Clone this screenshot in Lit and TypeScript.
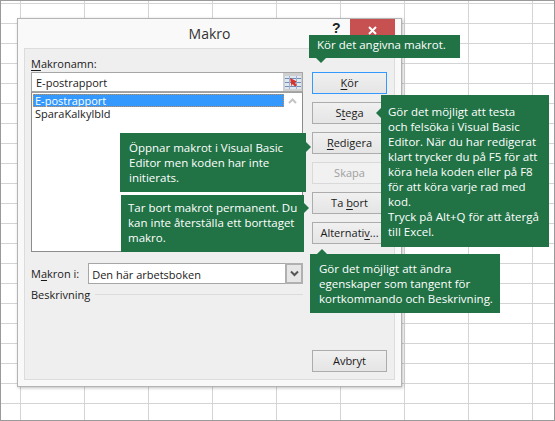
import { LitElement, html, css } from "lit";
import { customElement } from "lit/decorators.js";

@customElement("app-root")
export class AppRoot extends LitElement {
  static styles = css`
    :host {
      display: block;
      width: 555px;
      height: 421px;
      box-sizing: border-box;
      overflow: hidden;
      position: relative;
      font-family: "Open Sans", "Noto Sans", sans-serif;
      font-size: 11px;
      color: #1a1a1a;
      border: 1px solid #9a9a9a;
      background-color: #fff;
      background-image:
        linear-gradient(to right, #d4d4d4 1px, transparent 1px),
        linear-gradient(to bottom, #d4d4d4 1px, transparent 1px);
      background-size: 64px 20px;
      background-position: 19px 2px;
      padding: 17px 0 0 16px;
    }
    .dialog {
      width: 385px;
      height: 369px;
      box-sizing: border-box;
      background: #f9f9f9;
      border: 1px solid #b4b4b4;
      box-shadow: 1px 1px 3px rgba(0, 0, 0, 0.25);
      display: flex;
      flex-direction: column;
      padding: 0 6px 6px;
    }
    .title {
      height: 29px;
      flex: none;
      display: flex;
      align-items: center;
      justify-content: center;
      font-size: 14px;
      color: #333;
      position: relative;
    }
    .help {
      position: absolute;
      left: 308px;
      top: 1px;
      font-weight: 700;
      font-size: 14px;
      line-height: 16px;
      color: #222;
      font-family: "Liberation Sans", sans-serif;
    }
    .close {
      position: absolute;
      left: 326px;
      top: 0;
      width: 45px;
      height: 16px;
      background: #c75050;
      display: flex;
      align-items: center;
      justify-content: center;
      padding-top: 6px;
      box-sizing: border-box;
    }
    .panel {
      flex: 1;
      background: #efefef;
      border: 1px solid #dcdcdc;
      display: flex;
      gap: 9px;
      padding: 7px 7px 7px 6px;
    }
    .left {
      width: 272px;
      flex: none;
      display: flex;
      flex-direction: column;
    }
    u {
      text-underline-offset: 2px;
    }
    .lab {
      line-height: 15px;
      height: 15px;
      margin-bottom: 1px;
    }
    .name {
      display: flex;
      height: 20px;
      border: 1px solid #a6a6a6;
      box-sizing: border-box;
      background: #fff;
      align-items: center;
    }
    .name span {
      flex: 1;
      padding-left: 4px;
    }
    .pick {
      width: 19px;
      height: 18px;
      background: #cfcfcf;
      display: flex;
      align-items: center;
      justify-content: center;
    }
    .list {
      height: 160px;
      box-sizing: border-box;
      border: 1px solid #8c8c8c;
      border-top-color: #a0a0a0;
      background: #fff;
      display: flex;
      padding: 1px;
    }
    .items {
      flex: 1;
    }
    .item {
      height: 13px;
      line-height: 13px;
      padding-left: 2px;
    }
    .item.sel {
      background: #3399ff;
      color: #fff;
      outline: 1px dotted #d98a3c;
      outline-offset: -1px;
    }
    .scroll {
      width: 17px;
      display: flex;
      justify-content: center;
      padding-top: 4px;
      align-items: flex-start;
    }
    .in {
      display: flex;
      align-items: center;
      gap: 9px;
      margin-top: 11px;
    }
    .select {
      flex: 1;
      height: 21px;
      box-sizing: border-box;
      border: 1px solid #a6a6a6;
      background: #fff;
      display: flex;
      align-items: center;
      padding-left: 3px;
    }
    .select span {
      flex: 1;
      padding-top: 1px;
    }
    .arrow {
      width: 14px;
      height: 17px;
      background: #e6e6e6;
      border: 1px solid #b0b0b0;
      outline: 1px solid #b0b0b0;
      display: flex;
      align-items: center;
      justify-content: center;
    }
    .legend {
      display: flex;
      align-items: center;
      gap: 5px;
      margin-top: 3px;
      line-height: 15px;
    }
    .legend i {
      flex: 1;
      height: 1px;
      background: #dcdcdc;
    }
    .buttons {
      width: 75px;
      flex: none;
      display: flex;
      flex-direction: column;
      padding-top: 16px;
    }
    .btn {
      height: 22px;
      box-sizing: border-box;
      border: 1px solid #acacac;
      background: linear-gradient(#f0f0f0, #e5e5e5);
      display: flex;
      align-items: center;
      justify-content: center;
      margin-bottom: 8px;
      padding-bottom: 1px;
    }
    .btn.def {
      border-color: #3399ff;
    }
    .btn.off {
      color: #a0a0a0;
      background: #f1f1f1;
      border-color: #d9d9d9;
    }
    .btn.end {
      margin-top: auto;
      margin-bottom: 0;
    }
    .tip {
      position: absolute;
      background: #217346;
      color: #fff;
      box-sizing: border-box;
      font-size: 11.5px;
      line-height: 15px;
      white-space: nowrap;
    }
    .tip::after {
      content: "";
      position: absolute;
      width: 0;
      height: 0;
      border: 5px solid transparent;
    }
    .t1 {
      left: 308px;
      top: 34px;
      width: 151px;
      height: 23px;
      padding: 2px 8px;
    }
    .t1::after {
      left: 7px;
      top: 100%;
      border-top-color: #217346;
    }
    .t2 {
      left: 380px;
      top: 94px;
      width: 168px;
      height: 152px;
      padding: 9px 7px;
    }
    .t2::after {
      right: 100%;
      top: 13px;
      border-right-color: #217346;
    }
    .t3 {
      left: 119px;
      top: 132px;
      width: 186px;
      height: 59px;
      padding: 7px 9px;
    }
    .t3::after {
      left: 100%;
      top: 9px;
      border-left-color: #217346;
    }
    .t4 {
      left: 120px;
      top: 194px;
      width: 183px;
      height: 57px;
      padding: 5px 7px;
    }
    .t4::after {
      left: 100%;
      top: 8px;
      border-left-color: #217346;
    }
    .t5 {
      left: 309px;
      top: 253px;
      width: 190px;
      height: 59px;
      padding: 7px 9px;
    }
    .t5::after {
      left: 7px;
      bottom: 100%;
      border-bottom-color: #217346;
    }
  `;

  render() {
    return html`
      <div class="dialog">
        <div class="title">
          Makro
          <span class="help">?</span>
          <span class="close">
            <svg width="11" height="9" viewBox="0 0 11 9">
              <path d="M2 1l7 7M9 1L2 8" stroke="#fff" stroke-width="2" fill="none" />
            </svg>
          </span>
        </div>
        <div class="panel">
          <div class="left">
            <div class="lab"><u>M</u>akronamn:</div>
            <div class="name">
              <span>E-postrapport</span>
              <div class="pick">
                <svg width="16" height="13" viewBox="0 0 16 13">
                  <rect x="0" y="0" width="16" height="13" fill="#dfe7f1" />
                  <path d="M0 2.500h16M0 6.500h16M0 10.500h16" stroke="#6f8fb8" stroke-width="1" />
                  <path d="M4.500 0v13M11.500 0v13" stroke="#9db3cf" stroke-width="1" />
                  <path d="M5 2l7 3.500-2.500 1 2.500 2.500-2 1.500-2.500-2.500-1 2.500z" fill="#d8322a" />
                </svg>
              </div>
            </div>
            <div class="list">
              <div class="items">
                <div class="item sel">E-postrapport</div>
                <div class="item">SparaKalkylbld</div>
              </div>
              <div class="scroll">
                <svg width="9" height="6" viewBox="0 0 9 6">
                  <path d="M1 5l3.500-3.500L8 5" stroke="#c4c4c4" stroke-width="2" fill="none" />
                </svg>
              </div>
            </div>
            <div class="in">
              <span>M<u>a</u>kron i:</span>
              <div class="select">
                <span>Den här arbetsboken</span>
                <div class="arrow">
                  <svg width="9" height="7" viewBox="0 0 9 7">
                    <path d="M1 1.500l3.500 3.500L8 1.500" stroke="#555" stroke-width="2" fill="none" />
                  </svg>
                </div>
              </div>
            </div>
            <div class="legend"><span>Beskrivning</span><i></i></div>
          </div>
          <div class="buttons">
            <div class="btn def"><span><u>K</u>ör</span></div>
            <div class="btn"><span>S<u>t</u>ega</span></div>
            <div class="btn"><span><u>R</u>edigera</span></div>
            <div class="btn off"><span>Skapa</span></div>
            <div class="btn"><span>Ta <u>b</u>ort</span></div>
            <div class="btn"><span>Alternati<u>v</u>...</span></div>
            <div class="btn end"><span>Avbryt</span></div>
          </div>
        </div>
      </div>
      <div class="tip t1">Kör det angivna makrot.</div>
      <div class="tip t2">Gör det möjligt att testa<br />och felsöka i Visual Basic<br />Editor. När du har redigerat<br />klart trycker du på F5 för att<br />köra hela koden eller på F8<br />för att köra varje rad med<br />kod.<br />Tryck på Alt+Q för att återgå<br />till Excel.</div>
      <div class="tip t3">Öppnar makrot i Visual Basic<br />Editor men koden har inte<br />initierats.</div>
      <div class="tip t4">Tar bort makrot permanent. Du<br />kan inte återställa ett borttaget<br />makro.</div>
      <div class="tip t5">Gör det möjligt att ändra<br />egenskaper som tangent för<br />kortkommando och Beskrivning.</div>
    `;
  }
}
